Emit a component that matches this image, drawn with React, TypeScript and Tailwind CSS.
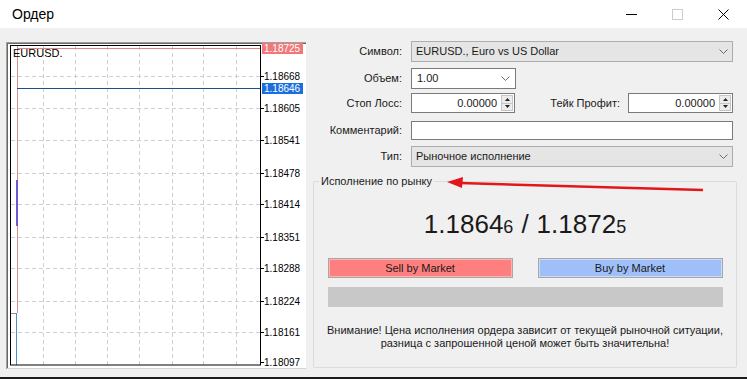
import React from 'react';

const gridX = [43, 75, 107, 139, 172, 203, 236];
const levels = [
  { y: 76, p: '1.18668' },
  { y: 108, p: '1.18605' },
  { y: 140, p: '1.18541' },
  { y: 173, p: '1.18478' },
  { y: 204, p: '1.18414' },
  { y: 237, p: '1.18351' },
  { y: 268, p: '1.18288' },
  { y: 301, p: '1.18224' },
  { y: 332, p: '1.18161' },
  { y: 362, p: '1.18097' },
];

function Chart() {
  return (
    <svg width="300" height="328" viewBox="6 42 300 328" className="block shrink-0 mt-[1px]">
      <rect x="6" y="42" width="300" height="328" fill="#f0f0f0" />
      <rect x="8" y="44" width="298" height="324" fill="#ffffff" />
      {/* sunken edge */}
      <line x1="6.5" y1="42" x2="6.5" y2="369" stroke="#a0a0a0" />
      <line x1="7.5" y1="43" x2="7.5" y2="368" stroke="#696969" />
      <line x1="6" y1="42.5" x2="306" y2="42.5" stroke="#a0a0a0" />
      <line x1="7" y1="43.5" x2="306" y2="43.5" stroke="#696969" />
      <line x1="7" y1="368.5" x2="306" y2="368.5" stroke="#d4d4d4" />
      {/* grid */}
      {gridX.map((x) => (
        <line key={x} x1={x + 0.5} y1="46" x2={x + 0.5} y2="365" stroke="#cfcfcf" strokeDasharray="4 3" />
      ))}
      {levels.slice(0, 9).map((l) => (
        <line key={l.y} x1="11" y1={l.y + 0.5} x2="260" y2={l.y + 0.5} stroke="#cfcfcf" strokeDasharray="4 3" />
      ))}
      {/* price lines */}
      <line x1="17" y1="48.5" x2="260" y2="48.5" stroke="#e08080" />
      <line x1="17.5" y1="46" x2="17.5" y2="313" stroke="#d49090" />
      <line x1="17" y1="88.5" x2="260" y2="88.5" stroke="#1f4f8a" />
      <line x1="17" y1="180" x2="17" y2="226" stroke="#6a5acd" strokeWidth="2" />
      <line x1="11" y1="313.5" x2="17" y2="313.5" stroke="#b08080" />
      <line x1="16.5" y1="313" x2="16.5" y2="365" stroke="#4a90c8" />
      {/* frame */}
      <rect x="10.5" y="45.5" width="250" height="319.5" fill="none" stroke="#000000" />
      {/* axis */}
      {levels.map((l) => (
        <g key={l.p}>
          <line x1="261" y1={l.y + 0.5} x2="264" y2={l.y + 0.5} stroke="#000000" />
          <text x="264" y={l.y + 4} fontSize="10" fill="#000000" fontFamily="Liberation Sans, sans-serif">
            {l.p}
          </text>
        </g>
      ))}
      <text x="13" y="57" fontSize="11" fill="#000000" fontFamily="Liberation Sans, sans-serif">EURUSD.</text>
      <rect x="262" y="43" width="41" height="11" fill="#f07878" />
      <text x="264" y="52" fontSize="10" fill="#ffffff" fontFamily="Liberation Sans, sans-serif">1.18725</text>
      <rect x="262" y="83" width="41" height="11" fill="#1a6fe0" />
      <text x="264" y="92" fontSize="10" fill="#ffffff" fontFamily="Liberation Sans, sans-serif">1.18646</text>
    </svg>
  );
}

function Chevron() {
  return (
    <svg width="9" height="6" viewBox="0 0 9 6" className="shrink-0">
      <polyline points="0.5,0.5 4.5,4.5 8.5,0.5" fill="none" stroke="#6a6a6a" strokeWidth="1" />
    </svg>
  );
}

function Spinner() {
  return (
    <div className="flex flex-col w-[12px] h-[16px] ml-auto mr-[1px] border border-[#c6c6c6] bg-[#ececec]">
      <div className="flex-1 flex items-center justify-center border-b border-[#c6c6c6]">
        <svg width="5" height="3" viewBox="0 0 5 3"><polygon points="0,3 2.5,0 5,3" fill="#222" /></svg>
      </div>
      <div className="flex-1 flex items-center justify-center">
        <svg width="5" height="3" viewBox="0 0 5 3"><polygon points="0,0 2.5,3 5,0" fill="#222" /></svg>
      </div>
    </div>
  );
}

function Label({ children }: { children: React.ReactNode }) {
  return <div className="w-[90px] shrink-0 text-right pr-[1px]">{children}</div>;
}

function NumberBox({ width }: { width: string }) {
  return (
    <div className={`${width} h-[20px] bg-white border border-[#7a7a7a] flex items-center`}>
      <span className="flex-1 text-right pr-[4px]">0.00000</span>
      <Spinner />
    </div>
  );
}

export default function App() {
  return (
    <div className="relative w-[747px] h-[379px] bg-[#f0f0f0] flex flex-col text-[11px] text-[#1a1a1a] font-['Liberation_Sans',sans-serif] overflow-hidden">
      {/* title bar */}
      <div className="h-[28px] bg-white flex items-center shrink-0">
        <span className="ml-[12px] text-[14px] text-black">Ордер</span>
        <div className="ml-auto flex items-center h-full">
          <div className="w-[46px] h-full flex items-center justify-center">
            <svg width="11" height="1"><line x1="0" y1="0.5" x2="11" y2="0.5" stroke="#000" /></svg>
          </div>
          <div className="w-[46px] h-full flex items-center justify-center">
            <svg width="11" height="11"><rect x="0.5" y="0.5" width="10" height="10" fill="none" stroke="#cccccc" /></svg>
          </div>
          <div className="w-[46px] h-full flex items-center justify-center mr-[1px]">
            <svg width="11" height="11"><path d="M0.5 0.5 L10.5 10.5 M10.5 0.5 L0.5 10.5" stroke="#000" /></svg>
          </div>
        </div>
      </div>

      <div className="flex flex-1 pt-[13px] pl-[6px]">
        <Chart />

        <div className="ml-[7px] w-[424px] flex flex-col">
          <div className="flex items-center h-[21px]">
            <Label>Символ:</Label>
            <div className="ml-[8px] w-[322px] h-[21px] bg-[#e5e5e5] border border-[#adadad] flex items-center px-[4px]">
              <span className="flex-1">EURUSD., Euro vs US Dollar</span>
              <Chevron />
            </div>
          </div>

          <div className="flex items-center h-[21px] mt-[6px]">
            <Label>Объем:</Label>
            <div className="ml-[8px] w-[105px] h-[21px] bg-white border border-[#7a7a7a] flex items-center px-[5px]">
              <span className="flex-1">1.00</span>
              <Chevron />
            </div>
          </div>

          <div className="flex items-center h-[20px] mt-[4px]">
            <Label>Стоп Лосс:</Label>
            <div className="ml-[8px]">
              <NumberBox width="w-[104px]" />
            </div>
            <div className="w-[105px] text-right shrink-0">Тейк Профит:</div>
            <div className="ml-[8px]">
              <NumberBox width="w-[105px]" />
            </div>
          </div>

          <div className="flex items-center h-[19px] mt-[8px]">
            <Label>Комментарий:</Label>
            <div className="ml-[8px] w-[322px] h-[19px] bg-white border border-[#7a7a7a]" />
          </div>

          <div className="flex items-center h-[21px] mt-[6px]">
            <Label>Тип:</Label>
            <div className="ml-[8px] w-[322px] h-[21px] bg-[#e5e5e5] border border-[#adadad] flex items-center px-[4px]">
              <span className="flex-1">Рыночное исполнение</span>
              <Chevron />
            </div>
          </div>

          <fieldset className="mt-[7px] w-[424px] h-[194px] border border-[#dcdcdc] rounded-[2px]">
            <legend className="ml-[5px] px-[2px] leading-[14px]">Исполнение по рынку</legend>
            <div className="flex flex-col items-center">
              <div className="mt-[21px] h-[30px] flex items-baseline text-[26px] leading-[30px] text-[#1a1a1a]">
                <span>1.1864</span>
                <span className="text-[18px]">6</span>
                <span className="mx-[8px]">/</span>
                <span>1.1872</span>
                <span className="text-[18px]">5</span>
              </div>
              <div className="mt-[19px] w-[395px] flex justify-between">
                <button className="w-[185px] h-[20px] bg-[#ff7f7f] border border-[#a8a8a8] shadow-[inset_0_0_0_1px_#ffb0b0] leading-[18px]">
                  Sell by Market
                </button>
                <button className="w-[185px] h-[20px] bg-[#9fbff8] border border-[#a8a8a8] shadow-[inset_0_0_0_1px_#c8daf8] leading-[18px]">
                  Buy by Market
                </button>
              </div>
              <div className="mt-[9px] w-[395px] h-[20px] bg-[#c8c8c8]" />
              <div className="mt-[17px] text-center leading-[13px]">
                Внимание! Цена исполнения ордера зависит от текущей рыночной ситуации,
                <br />
                разница с запрошенной ценой может быть значительна!
              </div>
            </div>
          </fieldset>
        </div>
      </div>

      <div className="h-[2px] bg-[#1c1c1c] shrink-0" />

      {/* annotation arrow */}
      <svg className="absolute left-0 top-0 pointer-events-none" width="747" height="379">
        <line x1="703" y1="190" x2="460" y2="183" stroke="#e4161c" strokeWidth="2.5" />
        <polygon points="447,182 463,177 462,188" fill="#e4161c" />
      </svg>
    </div>
  );
}
